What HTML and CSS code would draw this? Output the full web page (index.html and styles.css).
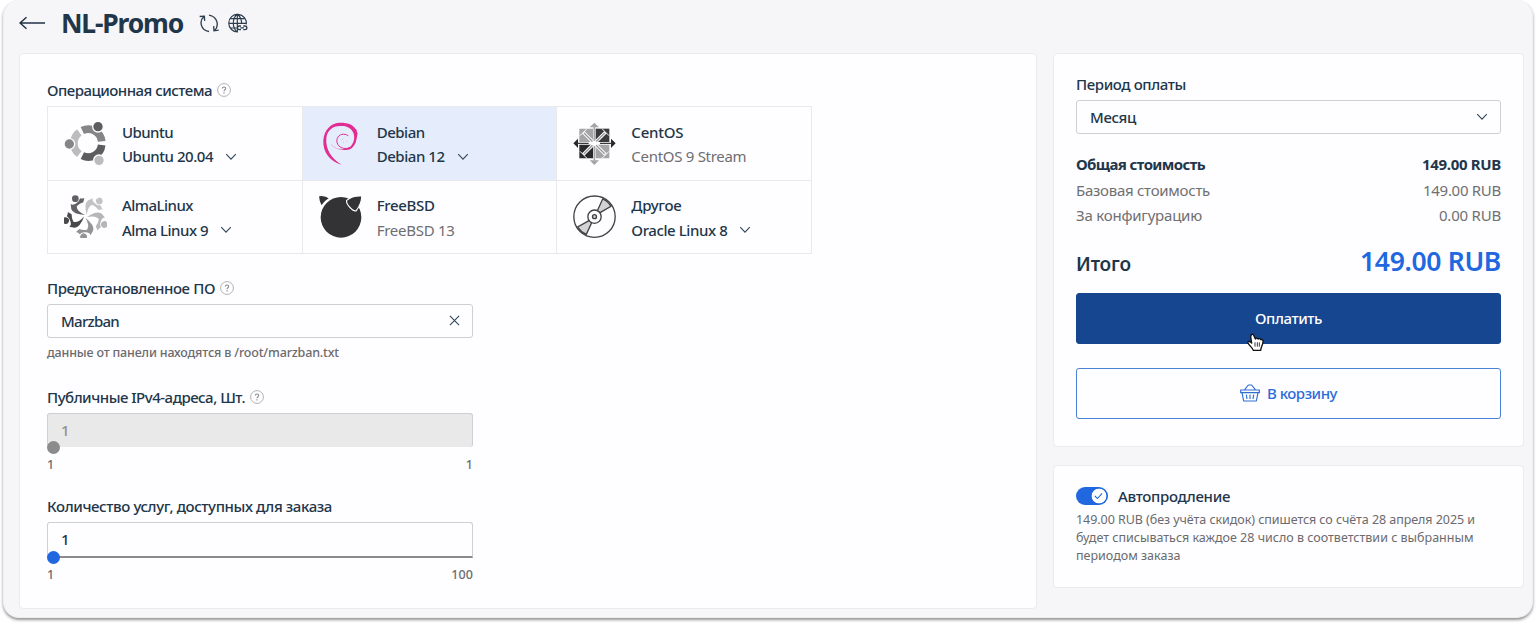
FILE: index.html
```html
<!DOCTYPE html>
<html lang="ru">
<head>
<meta charset="utf-8">
<title>NL-Promo</title>
<link rel="stylesheet" href="styles.css">
</head>
<body>
<svg class="defs" aria-hidden="true">
  <symbol id="chev" viewBox="0 0 12 8"><path d="M1.2 1.2 6 6.2l4.8-5" fill="none" stroke="#33475a" stroke-width="1.1"/></symbol>
  <symbol id="help" viewBox="0 0 14 14"><circle cx="7" cy="7" r="6.4" fill="none" stroke="#aaa" stroke-width=".9"/><path d="M5.3 5.6c.1-2.2 3.5-2.1 3.4 0C8.7 6.8 7 6.7 7 8.2M7 9.3v1.2" fill="none" stroke="#888" stroke-width="1.1"/></symbol>
</svg>
<div class="app">
  <header class="head">
    <svg class="back" viewBox="0 0 26 14"><path d="M26 7H1M7.5 1.2 1 7l6.5 5.800" fill="none" stroke="#1f3244" stroke-width="1.5"/></svg>
    <h1 class="title"><span class="t-title">NL-Promo</span></h1>
    <svg class="sync" viewBox="598 40 60 56"><g fill="none" stroke="#2c3d4e" stroke-width="4"><path d="M628 92C602 88 598 60 613 47M600 47l14-1 1 14M628 43C655 48 659 76 644 90M657 88l-14 2-1-14"/></g></svg>
    <svg class="globe" viewBox="686 38 60 60"><g fill="none" stroke="#2c3d4e" stroke-width="3.5"><path d="M741 72A26.500 26.500 0 1 0 716 95M714 41c-16 14-16 40-1 54M714 41c10 9 13 19 13 29M714 41v54M692 55h44M688 69h53M692 83h20"/><path stroke-width="4" d="M725 77h-5a5.500 5.500 0 0 0 0 11h5M732 77h5a5.500 5.500 0 0 1 0 11h-5M723 82.500h11"/></g></svg>
  </header>
  <div class="cols">
    <main class="card order">
      <div class="label"><span class="l-os">Операционная система</span><svg class="help"><use href="#help"/></svg></div>
      <div class="grid">
        <div class="os">
          <svg class="logo" viewBox="70 67 129 129"><g fill="none" stroke-width="23"><path d="M125 92.500A40.500 40.500 0 0 1 183 125" stroke="#858585"/><path d="M183 136A40.500 40.500 0 0 1 125 168" stroke="#5d5d60"/><path d="M116 163A40.500 40.500 0 0 1 116 98" stroke="#bcbcbd"/></g><g stroke="#fefdff" stroke-width="4"><circle cx="172" cy="81" r="16" fill="#5d5d60"/><circle cx="86" cy="133" r="16" fill="#858585"/><circle cx="175" cy="182" r="16" fill="#bcbcbd"/></g></svg>
          <div class="names"><span class="n-ubuntu">Ubuntu</span><div class="ver"><span class="v-ubuntu">Ubuntu 20.04</span><svg class="chev"><use href="#chev"/></svg></div></div>
        </div>
        <div class="os on">
          <svg class="logo" viewBox="55 67 129 129"><path fill="#e12d93" d="M123 195C88 186 66 158 68 122C70 91 91 69 119 69C142 69 157 75 164 87C170 88 167 96 171 101C166 126 166 136 151 147C136 154 119 152 108 144C118 150 135 150 146 143C159 134 164 115 158 99C151 84 136 77 120 79C98 78 79 91 77 116C74 148 92 178 123 195Z"/><path fill="none" stroke="#e12d93" stroke-width="3" d="M148 144C120 154 103 132 110 116C115 103 130 100 143 108"/><path fill="none" stroke="#e79cc8" stroke-width="2" d="M91 134C100 144 111 150 126 150M128 117l-5 4M127 128h3M137 125h3"/></svg>
          <div class="names"><span class="n-debian">Debian</span><div class="ver"><span class="v-debian">Debian 12</span><svg class="chev"><use href="#chev"/></svg></div></div>
        </div>
        <div class="os">
          <svg class="logo" viewBox="53 67 129 129"><path fill="#a5a5a7" d="M72 87h41v40H72zM121 135h41v41h-41zM117 69l14 14h-28zM117 196l14-14h-28z"/><path fill="#3a3a3d" d="M121 87h41v40h-41z"/><path fill="#29292c" d="M72 135h41v41H72zM54 131l14-14v28zM181 131l-14-14v28z"/><path stroke="#fefdff" stroke-width="10" d="M84 98l66 66M150 98l-66 66"/><path stroke="#99999c" stroke-width="4" d="M86 100l62 62M148 100l-62 62"/><path stroke="#a6a6a8" stroke-width="5" d="M117 80v103"/><path stroke="#39393c" stroke-width="4" d="M64 131h36M134 131h36"/><path fill="none" stroke="#fefdff" stroke-width="3" d="M74 108l21-21M140 87l21 21M161 155l-21 21M95 176l-21-21"/><circle cx="117" cy="131" r="8" fill="#fefdff"/></svg>
          <div class="names"><span class="n-centos">CentOS</span><div class="ver dim"><span class="v-centos">CentOS 9 Stream</span></div></div>
        </div>
        <div class="os">
          <svg class="logo" viewBox="70 287 129 129"><defs><g id="arm"><circle cx="104" cy="298" r="10"/><path d="M131 296L128 309Q117 312 108 321Q108 336 133 347Q97 345 92 330L90 314Q98 319 107 312Q116 308 118 297Q124 299 131 296Z"/></g></defs><use href="#arm" fill="#626266"/><use href="#arm" fill="#c3c3c5" transform="rotate(72 135 351)"/><use href="#arm" fill="#b6b6b8" transform="rotate(144 135 351)"/><use href="#arm" fill="#939396" transform="rotate(216 135 351)"/><use href="#arm" fill="#49494c" transform="rotate(288 135 351)"/></svg>
          <div class="names"><span class="n-alma">AlmaLinux</span><div class="ver"><span class="v-alma">Alma Linux 9</span><svg class="chev"><use href="#chev"/></svg></div></div>
        </div>
        <div class="os">
          <svg class="logo" viewBox="55 287 129 129"><circle cx="121" cy="354" r="61" fill="#333335"/><path fill="#333335" stroke="#fefdff" stroke-width="3.500" d="M54 289C66 287 79 290 87 297C77 303 68 311 62 321C56 310 53 299 54 289ZM138 303C151 292 166 289 183 290C184 305 177 320 167 334C158 338 135 315 138 303Z"/></svg>
          <div class="names"><span class="n-bsd">FreeBSD</span><div class="ver dim"><span class="v-bsd">FreeBSD 13</span></div></div>
        </div>
        <div class="os">
          <svg class="logo" viewBox="53 287 129 129"><g fill="none" stroke="#414143" stroke-width="4"><circle cx="117.500" cy="352" r="62"/><path fill="#d3d3d5" d="M126 334L142 299Q157 305 167 321L134 340ZM109 370L93 405Q77 398 67 383L101 364Z"/><circle cx="117.500" cy="352" r="20" fill="#fefdff"/><circle cx="117.500" cy="352" r="6" fill="#ccc"/></g></svg>
          <div class="names"><span class="n-other">Другое</span><div class="ver"><span class="v-other">Oracle Linux 8</span><svg class="chev"><use href="#chev"/></svg></div></div>
        </div>
      </div>
      <div class="label gap-a"><span class="l-soft">Предустановленное ПО</span><svg class="help"><use href="#help"/></svg></div>
      <div class="field"><span class="f-marz">Marzban</span><svg class="cross" viewBox="0 0 12 12"><path d="M1 1l10 10M11 1 1 11" stroke="#33475a" stroke-width="1.200"/></svg></div>
      <div class="hint"><span class="h-soft">данные от панели находятся в /root/marzban.txt</span></div>
      <div class="label gap-b"><span class="l-ip">Публичные IPv4-адреса, Шт.</span><svg class="help"><use href="#help"/></svg></div>
      <div class="slider off"><span>1</span><i class="knob"></i></div>
      <div class="range"><span>1</span><span>1</span></div>
      <div class="label gap-c"><span class="l-qty">Количество услуг, доступных для заказа</span></div>
      <div class="slider"><span>1</span><i class="knob"></i></div>
      <div class="range"><span>1</span><span class="r-100">100</span></div>
    </main>
    <aside class="side">
      <section class="card pay">
        <div class="label"><span class="l-period">Период оплаты</span></div>
        <div class="field"><span class="f-month">Месяц</span><svg class="chev"><use href="#chev"/></svg></div>
        <div class="sums">
          <div class="row strong"><span class="s-total">Общая стоимость</span><span class="p-total">149.00 RUB</span></div>
          <div class="row"><span class="s-base">Базовая стоимость</span><span class="p-base">149.00 RUB</span></div>
          <div class="row"><span class="s-conf">За конфигурацию</span><span class="p-conf">0.00 RUB</span></div>
        </div>
        <div class="total"><span class="t-sum">Итого</span><b class="price"><span class="t-price">149.00 RUB</span></b></div>
        <button class="btn primary"><span class="b-pay">Оплатить</span>
          <svg class="cursor" viewBox="615 295 56 57"><path fill="#fff" stroke="#111" stroke-width="4" stroke-linejoin="round" d="M631 300C635 297 638 300 639 304L643 313C646 309 650 310 651 313C654 310 658 312 659 315C664 313 667 317 666 321C666 330 660 336 659 347H637C635 339 625 334 621 325C619 320 625 318 632 325L629 306Z"/><path stroke="#111" stroke-width="2.500" d="M642 323v13M649 323v13M655 323v13"/></svg>
        </button>
        <button class="btn ghost"><svg class="basket" viewBox="602 445 60 54"><g fill="none" stroke="#2f6fd4" stroke-width="3.500" stroke-linejoin="round"><path d="M604 463h56v8h-56zM608 471l5 25h38l5-25M616 462l11-14h10l11 14M621 477l2 13M632 477v13M643 477l-2 13"/></g></svg><span class="b-cart">В корзину</span></button>
      </section>
      <section class="card renew">
        <div class="switch"><i class="toggle"><svg viewBox="0 0 10 8"><path d="M1 4l2.800 2.800L9 1" fill="none" stroke="#2067e0" stroke-width="1.200"/></svg></i><span class="t-auto">Автопродление</span></div>
        <p class="note"><span class="a1">149.00 RUB (без учёта скидок) спишется со счёта 28 апреля 2025 и</span><br>будет списываться каждое 28 число в соответствии с выбранным<br>периодом заказа</p>
      </section>
    </aside>
  </div>
</div>
</body>
</html>
```
FILE: styles.css
```css
* { box-sizing: border-box; }
body { margin: 0; height: 625px; overflow: hidden; background: #fff; padding: 0 3px; font: 500 15px/20px "Noto Sans", sans-serif; color: #22364a; }
.defs { position: absolute; width: 0; height: 0; }
svg { display: block; flex: none; }
.app { height: 618px; background: #f6f5f8; border-radius: 16px; padding: 0 8px 0 15px; border: 1px solid #eeedf0; border-top: 0; box-shadow: 0 2px 3px rgba(0,0,0,.42); }
.head { height: 53px; display: flex; align-items: center; padding-bottom: 7px; }
.back { width: 26px; height: 14px; }
.title { margin: 0 0 0 16px; width: 138px; font-size: 26.5px; line-height: 36px; font-weight: 700; white-space: nowrap; }
.sync { width: 20px; height: 19px; }
.globe { width: 20px; height: 20px; margin-left: 9px; }
.cols { display: flex; justify-content: space-between; align-items: flex-start; }
.card { background: #fefdff; border: 1px solid #ebeaed; border-radius: 4px; }
.order { width: 1018px; height: 556px; padding: 26px 27px 0; }
.label { display: flex; align-items: center; height: 20px; gap: 5px; white-space: nowrap; }
.help { width: 14px; height: 14px; }
.grid { margin-top: 6px; width: 765px; height: 148px; display: grid; grid-template-columns: repeat(3, 1fr); grid-template-rows: 1fr 1fr; gap: 1px; padding: 1px; background: #e9e8eb; }
.os { display: flex; align-items: center; background: #fefdff; padding-left: 16px; gap: 15px; }
.os.on { background: #e5edfc; }
.logo { width: 43px; height: 43px; }
.names { line-height: 24.5px; white-space: nowrap; padding-top: 2px; }
.ver { display: flex; align-items: center; gap: 12px; }
.dim { color: #6e6e70; font-weight: 400; }
.chev { width: 12px; height: 8px; }
.gap-a { margin-top: 24px; }
.gap-b { margin-top: 25px; }
.gap-c { margin-top: 22px; }
.field { margin-top: 6px; width: 426px; height: 34px; border: 1px solid #cfced1; border-radius: 3px; padding: 0 12px 1px 13px; display: flex; align-items: center; justify-content: space-between; }
.cross { width: 11px; height: 11px; }
.hint { margin-top: 6px; height: 18px; font-size: 12.5px; line-height: 18px; color: #6b6b6d; white-space: nowrap; }
.slider { position: relative; margin-top: 6px; width: 426px; height: 36px; border: 1px solid #cfced1; border-bottom: 2px solid #8b8b8d; border-radius: 3px 3px 0 0; padding: 0 13px 1px; display: flex; align-items: center; }
.off { height: 34px; background: #e9e9e9; border-bottom: 0; color: #8e8e90; border-radius: 3px; }
.knob { position: absolute; left: -1px; bottom: -8px; width: 13px; height: 13px; border-radius: 50%; background: #2067e0; }
.off .knob { bottom: -7px; background: #8b8b8b; }
.range { margin-top: 8px; width: 426px; height: 18px; display: flex; justify-content: space-between; font-size: 12.5px; line-height: 18px; color: #6b6b6d; }
.off + .range { margin-top: 9px; }
.side { width: 471px; display: grid; gap: 18px; }
.pay { height: 394px; padding: 21px 22px 0; }
.pay .label { position: relative; top: -1px; }
.pay .field { width: auto; margin-top: 5px; }
.sums { margin-top: 18px; }
.row { display: flex; justify-content: space-between; height: 25.6px; line-height: 25.6px; font-weight: 400; color: #707072; white-space: nowrap; }
.strong { font-weight: 700; color: #22364a; }
.total { display: flex; justify-content: space-between; align-items: baseline; margin-top: 12px; height: 52px; font-size: 19px; line-height: 40px; font-weight: 600; white-space: nowrap; }
.price { font-size: 26.5px; color: #2067e0; font-weight: 600; }
.btn { position: relative; display: flex; align-items: center; justify-content: center; gap: 7px; width: 100%; height: 51px; border-radius: 3px; font: inherit; padding: 0; }
.primary { background: #16468f; color: #fff; border: 1px solid #16468f; }
.ghost { margin-top: 24px; background: #fefdff; color: #2c6cd8; border: 1px solid #4a82d8; }
.cursor { position: absolute; left: 169px; top: 39px; width: 18.7px; height: 19px; }
.basket { width: 20px; height: 18px; }
.renew { height: 123px; padding: 20px 22px 0; }
.switch { display: flex; align-items: center; gap: 10px; height: 20px; white-space: nowrap; }
.toggle { width: 32px; height: 18px; border-radius: 9px; padding: 2px; background: radial-gradient(circle at 23px 9px, #fff 7px, #2067e0 7.7px); display: flex; justify-content: flex-end; align-items: center; }
.toggle svg { width: 9px; height: 8px; margin-right: 3px; }
.note { margin: 5px 0 0; font-size: 12.5px; line-height: 17.8px; font-weight: 400; color: #6b6b6d; white-space: nowrap; }

/* per-string tracking */
.t-title { letter-spacing: -1.197px; }
.l-os { letter-spacing: -.512px; }
.n-ubuntu { letter-spacing: -.557px; }
.v-ubuntu { letter-spacing: -.47px; }
.n-debian { letter-spacing: -.487px; }
.v-debian { letter-spacing: -.443px; }
.n-centos { letter-spacing: -.216px; }
.v-centos { letter-spacing: -.294px; }
.n-alma { letter-spacing: -.521px; }
.v-alma { letter-spacing: -.505px; }
.n-bsd { letter-spacing: -.317px; }
.v-bsd { letter-spacing: -.261px; }
.n-other { letter-spacing: -.313px; }
.v-other { letter-spacing: -.415px; }
.l-soft { letter-spacing: -.384px; }
.f-marz { letter-spacing: -.734px; }
.h-soft { letter-spacing: -.162px; }
.l-ip { letter-spacing: -.49px; }
.l-qty { letter-spacing: -.383px; }
.r-100 { letter-spacing: .1px; }
.l-period { letter-spacing: -.383px; }
.f-month { letter-spacing: -.338px; }
.s-total { letter-spacing: -.608px; }
.p-total { letter-spacing: -.317px; }
.s-base { letter-spacing: -.268px; }
.p-base { letter-spacing: -.287px; }
.s-conf { letter-spacing: -.214px; }
.p-conf { letter-spacing: -.215px; }
.t-sum { letter-spacing: -.141px; }
.t-price { letter-spacing: -.33px; }
.b-pay { letter-spacing: -.422px; }
.b-cart { letter-spacing: -.479px; }
.t-auto { letter-spacing: -.313px; }
.a1 { letter-spacing: -.053px; }
```
